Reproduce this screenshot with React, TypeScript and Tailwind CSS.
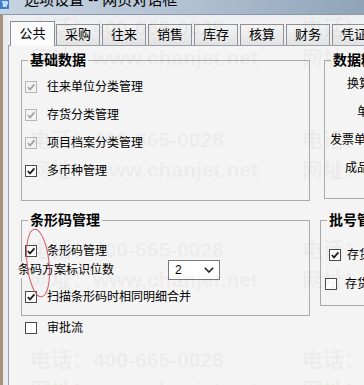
import React from 'react';

const FONT = "font-['Liberation_Sans','Noto_Sans_CJK_SC',sans-serif]";

function Check({ checked = false, disabled = false }: { checked?: boolean; disabled?: boolean }) {
    const box = disabled ? 'border-[#b5b5b5] bg-[#f4f4f4]' : 'border-[#4b4b4b] bg-white';
    return (
        <span className={`flex w-[12px] h-[12px] shrink-0 border ${box}`}>
            {checked && (
                <svg viewBox="0 0 10 10" className="w-[10px] h-[10px]">
                    <polyline
                        points="1.8,5 4,7.4 8.4,2.4"
                        fill="none"
                        stroke={disabled ? '#a3a3a3' : '#1c1c1c'}
                        strokeWidth="1.7"
                    />
                </svg>
            )}
        </span>
    );
}

function Row({ label, checked, disabled, gap = 10, pl = 3 }: { label: string; checked?: boolean; disabled?: boolean; gap?: number; pl?: number }) {
    return (
        <div className="flex items-center h-[28px] whitespace-nowrap" style={{ paddingLeft: pl }}>
            <Check checked={checked} disabled={disabled} />
            <span style={{ marginLeft: gap }}>{label}</span>
        </div>
    );
}

function Group({ title, className, children }: { title: string; className: string; children: React.ReactNode }) {
    return (
        <fieldset className={`border border-[#a9a9a9] shrink-0 ${className}`}>
            <legend className="ml-[6px] px-[2px] text-[14px] leading-[16px] font-bold whitespace-nowrap">{title}</legend>
            {children}
        </fieldset>
    );
}

const tabs = ['采购', '往来', '销售', '库存', '核算', '财务', '凭证'];

function Watermark() {
    const blocks = [28, 140, 250, 360];
    return (
        <div className="absolute inset-0 pointer-events-none text-[21px] leading-[24px] font-bold text-[rgba(0,0,0,0.05)] whitespace-nowrap">
            {blocks.map((y) => (
                <React.Fragment key={y}>
                    {[30, 302].map((x) => (
                        <React.Fragment key={x}>
                            <div className="absolute" style={{ left: x, top: y - 12 }}>电话：400-665-0028</div>
                            <div className="absolute" style={{ left: x, top: y + 18 }}>网址：www.chanjet.net</div>
                        </React.Fragment>
                    ))}
                </React.Fragment>
            ))}
        </div>
    );
}

export default function App() {
    return (
        <div className={`relative w-[364px] h-[385px] overflow-hidden bg-[#f0f0f0] text-[12px] text-black ${FONT}`}>
            {/* title bar, top half cut off */}
            <div className="h-[15px] flex overflow-hidden bg-gradient-to-r from-[#c6d3e1] via-[#b3c2d3] to-[#8fa3b9] border-b border-[#8d99a8]">
                <svg viewBox="0 0 9 9" className="w-[9px] h-[9px] shrink-0">
                    <rect x="0" y="0" width="9" height="9" fill="#3f7fc8" />
                    <path d="M2 2 H7 V4 H3.5 V6 H7" fill="none" stroke="#e8f2ff" strokeWidth="1.3" />
                </svg>
                <span className="ml-[15px] -mt-[9px] text-[15px] leading-[18px] whitespace-nowrap">选项设置 -- 网页对话框</span>
            </div>

            <div className="flex h-[370px]">
                <div className="w-[3px] bg-[#a8917a]" />
                <div className="w-[5px] bg-[#e9ebef]" />
                <div className="flex-1 flex flex-col min-w-0">
                    <div className="h-[5px] bg-[#eceef1]" />

                    {/* tabs */}
                    <div className="h-[25px] flex items-end pl-[2px] whitespace-nowrap text-[13px]">
                        <div className="relative z-10 -mb-px w-[45px] h-[25px] shrink-0 flex items-center justify-center border border-b-0 border-[#898c95] bg-[#fbfbfb]">
                            公共
                        </div>
                        {tabs.map((t, i) => (
                            <div
                                key={t}
                                className={`w-[44px] h-[21px] shrink-0 flex items-center justify-center border border-b-0 border-[#8e9199] bg-gradient-to-b from-[#f4f4f4] to-[#e2e2e2] ${i === 0 ? 'ml-px' : 'ml-[2px]'}`}
                            >
                                {t}
                            </div>
                        ))}
                    </div>

                    {/* tab panel */}
                    <div className="flex-1 border-l border-t border-[#9aa0ae] bg-[#f4f4f4] pl-[12px] pt-[6px]">
                        <div className="flex">
                            <Group title="基础数据" className="w-[289px] h-[149px]">
                                <div className="pt-[5px]">
                                    <Row label="往来单位分类管理" checked disabled />
                                    <Row label="存货分类管理" checked disabled />
                                    <Row label="项目档案分类管理" checked disabled />
                                    <Row label="多币种管理" checked />
                                </div>
                            </Group>
                            <Group title="数据精度" className="ml-[14px] w-[120px] h-[147px]">
                                <div className="pt-[2px] whitespace-nowrap">
                                    <div className="h-[28px] flex items-center pl-[22px]">换算率小数位</div>
                                    <div className="h-[28px] flex items-center pl-[32px]">单价小数位</div>
                                    <div className="h-[28px] flex items-center pl-[5px]">发票单价小数位</div>
                                    <div className="h-[28px] flex items-center pl-[20px]">成品率小数位</div>
                                </div>
                            </Group>
                        </div>

                        <div className="flex mt-[11px]">
                            <Group title="条形码管理" className="w-[289px] h-[104px]">
                                <div className="pt-[14px] whitespace-nowrap">
                                    <div className="h-[18px] flex items-center pl-[3px]">
                                        <Check checked />
                                        <span className="ml-[10px]">条形码管理</span>
                                    </div>
                                    <div className="h-[20px] flex items-center -ml-[4px]">
                                        <span className="bg-[#f4f4f4] leading-[16px]">条码方案标识位数</span>
                                        <div className="ml-[54px] w-[52px] h-[20px] flex items-center justify-between border border-[#7a7a7a] bg-white pl-[6px] pr-[5px]">
                                            <span>2</span>
                                            <svg viewBox="0 0 10 6" className="w-[10px] h-[6px]">
                                                <polyline points="0.8,0.8 5,5 9.2,0.8" fill="none" stroke="#222" strokeWidth="1.6" />
                                            </svg>
                                        </div>
                                    </div>
                                    <div className="mt-[8px] h-[18px] flex items-center pl-[3px]">
                                        <Check checked />
                                        <span className="ml-[10px]">扫描条形码时相同明细合并</span>
                                    </div>
                                </div>
                            </Group>
                            <Group title="批号管理" className="ml-[10px] w-[120px] h-[94px]">
                                <div className="pt-[13px] whitespace-nowrap">
                                    <div className="h-[28px] flex items-center pl-[8px]">
                                        <Check checked />
                                        <span className="ml-[6px]">存货批次管理</span>
                                    </div>
                                    <div className="h-[30px] flex items-center pl-[4px]">
                                        <Check />
                                        <span className="ml-[8px]">存货保质期管理</span>
                                    </div>
                                </div>
                            </Group>
                        </div>

                        <div className="mt-[5px] h-[14px] flex items-center pl-[4px] whitespace-nowrap">
                            <Check />
                            <span className="ml-[10px]">审批流</span>
                        </div>
                    </div>
                </div>
            </div>

            <Watermark />

            {/* hand-drawn annotation */}
            <svg className="absolute left-0 top-0 pointer-events-none" width="364" height="385">
                <ellipse cx="38" cy="263" rx="11" ry="34" fill="none" stroke="#d55a6e" strokeWidth="1" transform="rotate(-6 38 263)" />
            </svg>
        </div>
    );
}
